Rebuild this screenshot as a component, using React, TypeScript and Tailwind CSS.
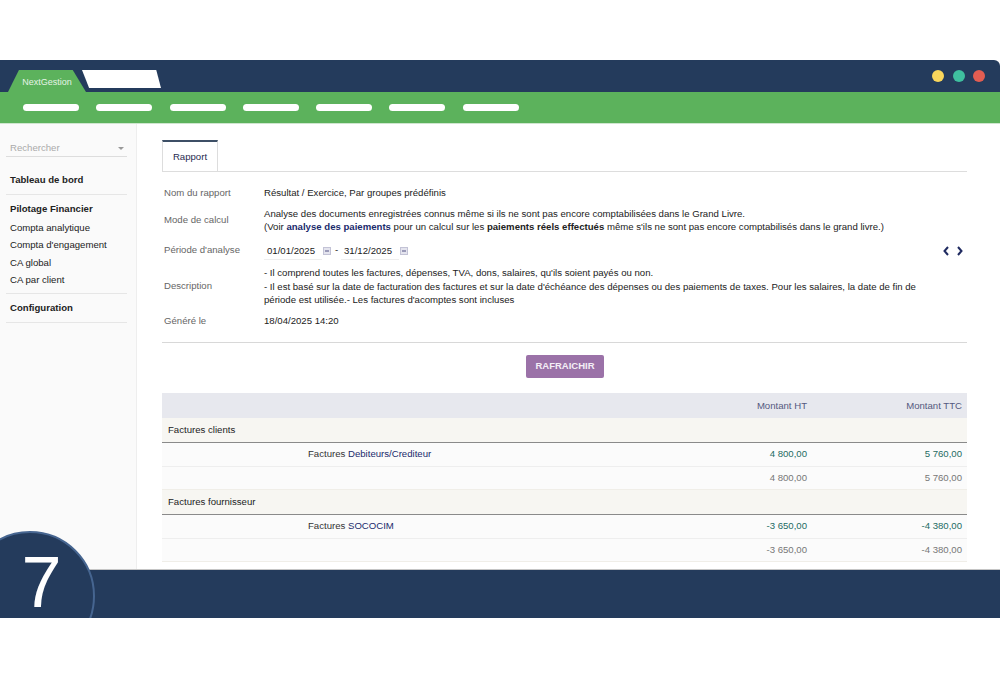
const menuBars = [0, 1, 2, 3, 4, 5, 6];

function Sidebar() {
  return (
    <aside className="w-[137px] shrink-0 bg-[#fafafa] border-r border-[#eeeeee] pl-[6px] pr-[9px] pt-[15px] text-[9.6px] text-[#222222]">
      <div className="flex h-[18px] items-center justify-between border-b border-[#dddddd] pl-[4px] pr-[3px] pt-[2px] text-[#aaaaaa]">
        <span>Rechercher</span>
        <span className="h-0 w-0 border-x-[3px] border-t-[3px] border-x-transparent border-t-[#999999]" />
      </div>
      <div className="h-[38px] border-b border-[#e6e6e6] px-[4px] pt-[16px] font-bold leading-[13px]">Tableau de bord</div>
      <div className="h-[99px] border-b border-[#e6e6e6] px-[4px] pt-[7px]">
        <div className="mb-[2.5px] font-bold leading-[14px]">Pilotage Financier</div>
        <div className="leading-[17.5px]">Compta analytique</div>
        <div className="leading-[17.5px]">Compta d'engagement</div>
        <div className="leading-[17.5px]">CA global</div>
        <div className="leading-[17.5px]">CA par client</div>
      </div>
      <div className="h-[29px] border-b border-[#e6e6e6] px-[4px] pt-[7px] font-bold leading-[13px]">Configuration</div>
    </aside>
  );
}

function CalendarIcon() {
  return (
    <span className="flex h-[8px] w-[8px] items-center justify-center border border-[#c3c3d6] bg-[#e4e4ee]">
      <span className="h-[2px] w-[4px] bg-[#9a9ab8]" />
    </span>
  );
}

function InfoRow({ label, height, children }: { label: string; height: string; children: React.ReactNode }) {
  return (
    <div className={`flex items-center ${height}`}>
      <div className="w-[102px] shrink-0 pl-[2px] text-[#666666]">{label}</div>
      <div className="flex-1 text-[#222222]">{children}</div>
    </div>
  );
}

function GroupRow({ label }: { label: string }) {
  return (
    <div className="flex h-[25px] items-center border-b border-[#8a8a8a] bg-[#f7f6f2] pl-[6px] text-[#222222]">{label}</div>
  );
}

function DetailRow({ name, link, ht, ttc }: { name: string; link: string; ht: string; ttc: string }) {
  return (
    <div className="flex h-[24px] items-center border-b border-[#eeeeee] bg-[#fbfbfb]">
      <div className="flex-1 pl-[146px] text-[#333333]">
        {name} <span className="text-[#1a2a6c]">{link}</span>
      </div>
      <div className="w-[100px] text-right text-[#1d6b63]">{ht}</div>
      <div className="w-[160px] pr-[5px] text-right text-[#1d6b63]">{ttc}</div>
    </div>
  );
}

function TotalRow({ ht, ttc }: { ht: string; ttc: string }) {
  return (
    <div className="flex h-[23px] items-center border-b border-[#f0eee8] bg-[#fbfbfb] text-[#777777]">
      <div className="flex-1" />
      <div className="w-[100px] text-right">{ht}</div>
      <div className="w-[160px] pr-[5px] text-right">{ttc}</div>
    </div>
  );
}

export default function App() {
  return (
    <div className="h-[679px] w-[1000px] overflow-hidden bg-white pt-[60px] font-['Liberation_Sans',Arial,sans-serif]">
      <div className="relative h-[558px] overflow-hidden">
        {/* top bar */}
        <div className="relative flex h-[32px] items-center justify-end gap-[8.5px] rounded-tr-[6px] bg-[#243b5c] pr-[15px]">
          <span className="absolute left-[8px] top-[10px] flex h-[22px] w-[78px] items-center justify-center bg-[#5cb25c] pt-[3px] text-[9px] text-[#e6f3e6] [clip-path:polygon(0_100%,14%_0,83%_0,100%_100%)]">
            NextGestion
          </span>
          <span className="absolute left-[82px] top-[10px] h-[18px] w-[79px] bg-white [clip-path:polygon(0_0,94%_0,100%_100%,9%_100%)]" />
          <span className="h-[12px] w-[12px] rounded-full bg-[#f9d65c]" />
          <span className="h-[12px] w-[12px] rounded-full bg-[#3fbf9f]" />
          <span className="h-[12px] w-[12px] rounded-full bg-[#e25d52]" />
        </div>
        {/* menu bar */}
        <div className="flex h-[32px] items-center gap-[17.3px] border-b border-[#cfe6cf] bg-[#5cb25c] pl-[23px]">
          {menuBars.map((i) => (
            <span key={i} className="h-[7px] w-[56px] rounded-full bg-white" />
          ))}
        </div>

        <div className="flex h-[445px] overflow-hidden">
          <Sidebar />
          <main className="flex-1 overflow-hidden pl-[25px] pr-[33px] pt-[16px] text-[9.6px]">
            <div className="flex h-[32px] border-b border-[#dddddd]">
              <div className="flex h-[32px] w-[56px] items-center justify-center border-x border-[#dddddd] border-t-2 border-t-[#3d4f66] text-[#1f2a50]">
                Rapport
              </div>
            </div>

            <div className="mt-[10px] border-b border-[#d8d8d8] pb-[8px]">
              <InfoRow label="Nom du rapport" height="h-[21px] pt-[2px]">Résultat / Exercice, Par groupes prédéfinis</InfoRow>
              <InfoRow label="Mode de calcul" height="h-[34px]">
                <div className="leading-[13.5px]">Analyse des documents enregistrées connus même si ils ne sont pas encore comptabilisées dans le Grand Livre.</div>
                <div className="leading-[13.5px]">
                  (Voir <b className="text-[#1a2a6c]">analyse des paiements</b> pour un calcul sur les <b>paiements réels effectués</b> même s'ils ne sont pas encore comptabilisés dans le grand livre.)
                </div>
              </InfoRow>
              <InfoRow label="Période d'analyse" height="h-[27px]">
                <div className="flex items-center">
                  <span className="w-[58px] border-b border-[#eeeeee] pl-[3px] leading-[17px]">01/01/2025</span>
                  <span className="ml-[1px]"><CalendarIcon /></span>
                  <span className="ml-[4px] w-[6px]">-</span>
                  <span className="w-[58px] border-b border-[#eeeeee] pl-[3px] leading-[17px]">31/12/2025</span>
                  <span className="ml-[1px]"><CalendarIcon /></span>
                  <span className="ml-auto flex gap-[8px] pr-[4px]">
                    <svg width="6" height="10" viewBox="0 0 6 10" fill="none" stroke="#1f2a60" strokeWidth="2"><path d="M5 1 1.5 5 5 9" /></svg>
                    <svg width="6" height="10" viewBox="0 0 6 10" fill="none" stroke="#1f2a60" strokeWidth="2"><path d="M1 1 4.5 5 1 9" /></svg>
                  </span>
                </div>
              </InfoRow>
              <InfoRow label="Description" height="h-[43px] pt-[2px]">
                <div className="pr-[50px] leading-[13.5px]">
                  <div>- Il comprend toutes les factures, dépenses, TVA, dons, salaires, qu'ils soient payés ou non.</div>
                  <div>- Il est basé sur la date de facturation des factures et sur la date d'échéance des dépenses ou des paiements de taxes. Pour les salaires, la date de fin de période est utilisée.- Les factures d'acomptes sont incluses</div>
                </div>
              </InfoRow>
              <InfoRow label="Généré le" height="h-[27px] pt-[2px]">18/04/2025 14:20</InfoRow>
            </div>

            <div className="flex justify-center pt-[12px] pb-[15px]">
              <button className="ml-[1px] h-[23px] w-[78px] rounded-[2px] bg-[#9b72a8] text-[9.5px] font-bold text-[#f4eef6]">RAFRAICHIR</button>
            </div>

            <div className="flex h-[25px] items-center bg-[#e7e8ee] pt-[1px] text-[#55597f]">
              <div className="flex-1" />
              <div className="w-[100px] text-right">Montant HT</div>
              <div className="w-[160px] pr-[5px] text-right">Montant TTC</div>
            </div>
            <GroupRow label="Factures clients" />
            <DetailRow name="Factures" link="Debiteurs/Crediteur" ht="4 800,00" ttc="5 760,00" />
            <TotalRow ht="4 800,00" ttc="5 760,00" />
            <GroupRow label="Factures fournisseur" />
            <DetailRow name="Factures" link="SOCOCIM" ht="-3 650,00" ttc="-4 380,00" />
            <TotalRow ht="-3 650,00" ttc="-4 380,00" />
          </main>
        </div>

        {/* footer */}
        <div className="h-[49px] border-t border-[#c5c5c5] bg-[#243b5c]" />
        <div className="absolute left-[-35px] top-[471px] flex h-[130px] w-[130px] justify-center rounded-full border-2 border-[#466590] bg-[#243b5c]">
          <span className="mt-[14px] h-[70px] pl-[23px] text-[72px] leading-[70px] text-white">7</span>
        </div>
      </div>
    </div>
  );
}
